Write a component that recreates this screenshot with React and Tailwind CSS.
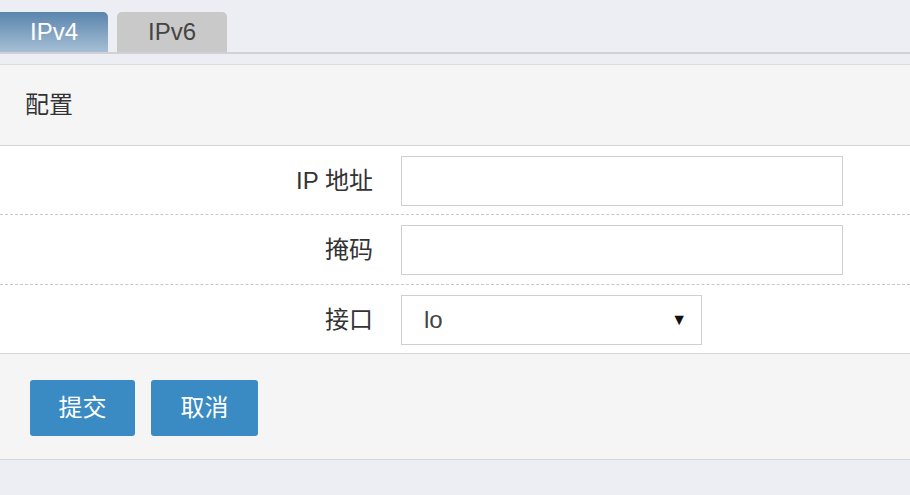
const font = { fontFamily: '"Liberation Sans", "Noto Sans CJK SC", sans-serif' };

const Row = ({ label, children, last, tall }) => (
  <div
    className={`flex items-start pt-[10px] bg-white ${tall ? "h-[70px]" : "h-[69px]"} ${
      last ? "border-b border-[#d6d6d6]" : "border-b border-dashed border-[#c8c8c8]"
    }`}
  >
    <div className="w-[373px] h-[50px] flex items-center justify-end text-[24px] text-[#333]">{label}</div>
    <div className="ml-[28px]">{children}</div>
  </div>
);

export default function App() {
  return (
    <div className="w-[910px] h-[495px] bg-[#eceef3] overflow-hidden" style={font}>
      <div className="flex items-end gap-[9px] pt-[12px] border-b-2 border-[#cfd1d7]">
        <div className="w-[108px] h-[40px] rounded-tr-[5px] bg-gradient-to-b from-[#5a85ad] to-[#a6bfd5] flex items-center justify-center text-[24px] text-white">
          IPv4
        </div>
        <div className="w-[110px] h-[40px] rounded-t-[5px] bg-[#c9c9c9] flex items-center justify-center text-[24px] text-[#444]">
          IPv6
        </div>
      </div>

      <div className="mt-[10px] border-t border-[#dcdcdc] bg-[#f5f5f5]">
        <div className="h-[81px] flex items-center px-[25px] text-[24px] text-[#333] border-b border-[#d6d6d6]">
          配置
        </div>

        <Row label="IP 地址">
          <input className="w-[442px] h-[50px] border border-[#cfcfcf] bg-white outline-none" />
        </Row>
        <Row label="掩码" tall>
          <input className="w-[442px] h-[50px] border border-[#cfcfcf] bg-white outline-none" />
        </Row>
        <Row label="接口" last>
          <div className="w-[301px] h-[50px] border border-[#cfcfcf] bg-white flex items-center justify-between pl-[22px] pr-[14px] text-[24px] text-[#444]">
            <span>lo</span>
            <span className="text-[16px] text-[#111]">▼</span>
          </div>
        </Row>

        <div className="h-[106px] flex items-start gap-[16px] pt-[26px] px-[30px] border-b border-[#d6d6d6]">
          <button className="w-[105px] h-[56px] rounded-[3px] bg-[#3a8bc3] text-white text-[24px]">提交</button>
          <button className="w-[107px] h-[56px] rounded-[3px] bg-[#3a8bc3] text-white text-[24px]">取消</button>
        </div>
      </div>
    </div>
  );
}
